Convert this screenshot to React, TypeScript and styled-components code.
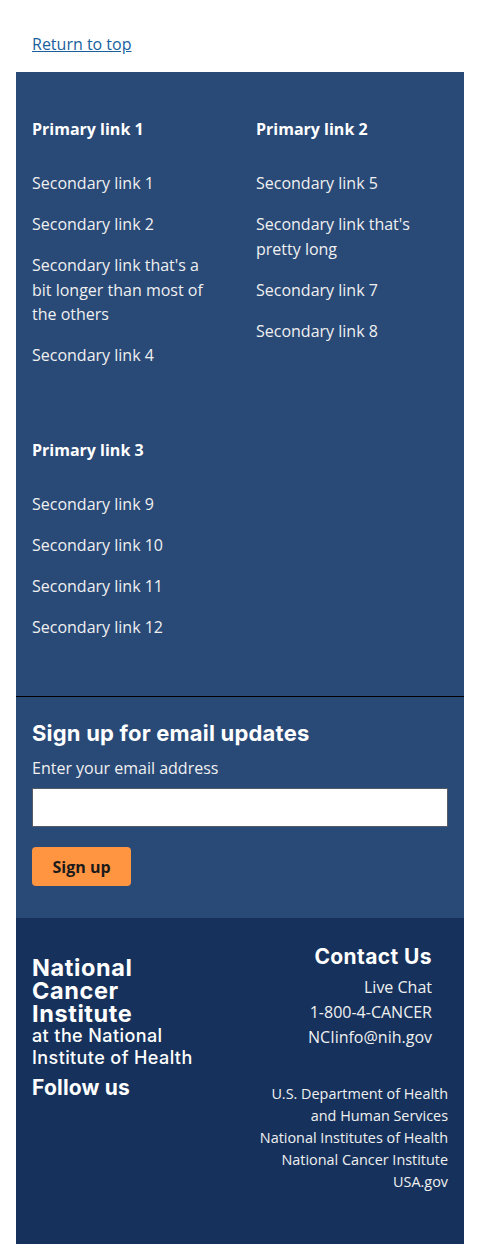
import React from "react";
import styled, { createGlobalStyle } from "styled-components";

const GlobalStyle = createGlobalStyle`
  body {
    margin: 0;
    background: #fff;
    font-family: "Open Sans", "Liberation Sans", sans-serif;
  }
  * { box-sizing: border-box; }
`;

const heading = `"Inter", "Noto Sans", "Liberation Sans", sans-serif`;

const Page = styled.div`
  padding: 16px;
`;

const ReturnWrap = styled.div`
  padding: 16px 16px 0;
  height: 56px;
`;

const ReturnLink = styled.a`
  color: #1a5f9e;
  font-size: 16px;
  line-height: 24px;
  text-decoration: underline;
`;

const Primary = styled.nav`
  background: #294977;
  padding: 45px 16px 57px;
  display: grid;
  grid-template-columns: 184px 184px;
  column-gap: 40px;
  row-gap: 70px;
  border-bottom: 1px solid #000;
`;

const Group = styled.div``;

const PrimaryLink = styled.a`
  display: block;
  color: #fff;
  font-weight: 700;
  font-size: 16px;
  line-height: 24px;
  margin-bottom: 30px;
`;

const List = styled.ul`
  list-style: none;
  margin: 0;
  padding: 0;
  display: flex;
  flex-direction: column;
  gap: 16.5px;
`;

const Secondary = styled.li`
  color: #f0f0f0;
  font-size: 16px;
  line-height: 24.5px;
`;

const Signup = styled.section`
  background: #294977;
  padding: 21px 16px 32px;
`;

const SignupTitle = styled.h2`
  margin: 0 0 8px;
  font-family: ${heading};
  font-weight: 700;
  font-size: 22px;
  line-height: 30px;
  letter-spacing: 0.2px;
  color: #fff;
`;

const Label = styled.label`
  display: block;
  color: #f0f0f0;
  font-size: 16px;
  line-height: 24px;
  margin-bottom: 8px;
`;

const Input = styled.input`
  display: block;
  width: 100%;
  height: 39px;
  border: 1px solid #565c65;
  background: #fff;
  margin-bottom: 20px;
`;

const Button = styled.button`
  display: block;
  width: 99px;
  height: 39px;
  border: 0;
  border-radius: 4px;
  background: #ff9441;
  color: #1b1b1b;
  font-family: "Open Sans", "Liberation Sans", sans-serif;
  font-weight: 700;
  font-size: 16px;
`;

const Identity = styled.footer`
  background: #16325c;
  padding: 26px 16px 0;
  height: 326px;
  display: flex;
  justify-content: space-between;
`;

const Brand = styled.div`
  padding-top: 12px;
  width: 200px;
`;

const Name = styled.div`
  font-family: ${heading};
  font-weight: 700;
  font-size: 23.5px;
  line-height: 23px;
  letter-spacing: 0.6px;
  color: #fff;
`;

const Sub = styled.div`
  font-family: ${heading};
  font-weight: 500;
  font-size: 18px;
  line-height: 22px;
  letter-spacing: 0.4px;
  color: #fff;
  margin-bottom: 7px;
`;

const Follow = styled.div`
  font-family: ${heading};
  font-weight: 700;
  font-size: 21px;
  line-height: 24px;
  letter-spacing: 0.2px;
  color: #fff;
`;

const Right = styled.div`
  display: flex;
  flex-direction: column;
  align-items: flex-end;
  text-align: right;
`;

const Contact = styled.div`
  padding-right: 16px;
  margin-bottom: 33px;
`;

const ContactTitle = styled.h3`
  margin: 0 0 5px;
  font-family: ${heading};
  font-weight: 700;
  font-size: 21px;
  line-height: 26px;
  letter-spacing: 0.4px;
  color: #fff;
`;

const ContactLine = styled.div`
  color: #f0f0f0;
  font-size: 16px;
  line-height: 25px;
`;

const Agency = styled.div`
  color: #f0f0f0;
  font-size: 14.4px;
  line-height: 22px;
`;

const groups = [
  {
    title: "Primary link 1",
    links: [
      "Secondary link 1",
      "Secondary link 2",
      "Secondary link that's a bit longer than most of the others",
      "Secondary link 4",
    ],
  },
  {
    title: "Primary link 2",
    links: [
      "Secondary link 5",
      "Secondary link that's pretty long",
      "Secondary link 7",
      "Secondary link 8",
    ],
  },
  {
    title: "Primary link 3",
    links: [
      "Secondary link 9",
      "Secondary link 10",
      "Secondary link 11",
      "Secondary link 12",
    ],
  },
];

const agencies = [
  "U.S. Department of Health",
  "and Human Services",
  "National Institutes of Health",
  "National Cancer Institute",
  "USA.gov",
];

const App = () => {
  return (
    <Page>
      <GlobalStyle />
      <ReturnWrap>
        <ReturnLink href="#">Return to top</ReturnLink>
      </ReturnWrap>
      <Primary>
        {groups.map((g) => (
          <Group key={g.title}>
            <PrimaryLink>{g.title}</PrimaryLink>
            <List>
              {g.links.map((l) => (
                <Secondary key={l}>{l}</Secondary>
              ))}
            </List>
          </Group>
        ))}
      </Primary>
      <Signup>
        <SignupTitle>Sign up for email updates</SignupTitle>
        <Label htmlFor="email">Enter your email address</Label>
        <Input id="email" type="email" />
        <Button>Sign up</Button>
      </Signup>
      <Identity>
        <Brand>
          <Name>
            National
            <br />
            Cancer
            <br />
            Institute
          </Name>
          <Sub>
            at the National
            <br />
            Institute of Health
          </Sub>
          <Follow>Follow us</Follow>
        </Brand>
        <Right>
          <Contact>
            <ContactTitle>Contact Us</ContactTitle>
            <ContactLine>Live Chat</ContactLine>
            <ContactLine>1-800-4-CANCER</ContactLine>
            <ContactLine>NCIinfo@nih.gov</ContactLine>
          </Contact>
          {agencies.map((a) => (
            <Agency key={a}>{a}</Agency>
          ))}
        </Right>
      </Identity>
    </Page>
  );
};

export default App;
